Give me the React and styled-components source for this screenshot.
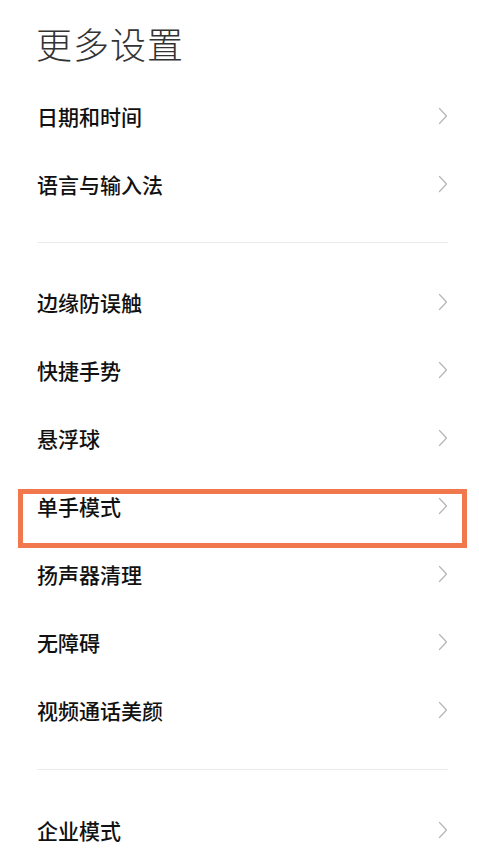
import styled, { createGlobalStyle } from 'styled-components';

const GlobalStyle = createGlobalStyle`
  body {
    margin: 0;
    background: #ffffff;
    font-family: "Noto Sans CJK SC", "Noto Sans", sans-serif;
  }
`;

const Page = styled.div`
  width: 479px;
  min-height: 865px;
  background: #ffffff;
  overflow: hidden;
`;

const Title = styled.h1`
  margin: 0;
  height: 82px;
  padding: 18px 0 0 36px;
  box-sizing: border-box;
  font-size: 36px;
  font-weight: 300;
  line-height: 50px;
  color: #333333;
  letter-spacing: 1px;
`;

const Group = styled.div`
  padding: 0 31px 0 37px;
`;

const Divider = styled.div`
  height: 1px;
  margin: ${(p) => p.$top}px 31px ${(p) => p.$bottom}px 37px;
  background: #ececec;
`;

const Row = styled.div`
  position: relative;
  height: 68px;
  display: flex;
  align-items: center;
  justify-content: space-between;
`;

const Label = styled.span`
  font-size: 21px;
  font-weight: 500;
  color: #111111;
`;

const Highlight = styled.div`
  position: absolute;
  left: -19px;
  right: -19px;
  top: 17px;
  height: 59px;
  border: 5px solid #f0784c;
  box-sizing: border-box;
  pointer-events: none;
`;

const Chevron = () => (
  <svg width="10" height="18" viewBox="0 0 10 18" fill="none">
    <path d="M1.5 1.5 L8.5 9 L1.5 16.5" stroke="#b5b5b5" strokeWidth="1.2" strokeLinecap="round" strokeLinejoin="round" />
  </svg>
);

const Item = ({ label, highlighted }) => (
  <Row>
    <Label>{label}</Label>
    <Chevron />
    {highlighted && <Highlight />}
  </Row>
);

export default function App() {
  return (
    <Page>
      <GlobalStyle />
      <Title>更多设置</Title>
      <Group>
        <Item label="日期和时间" />
        <Item label="语言与输入法" />
      </Group>
      <Divider $top={24} $bottom={25} />
      <Group>
        <Item label="边缘防误触" />
        <Item label="快捷手势" />
        <Item label="悬浮球" />
        <Item label="单手模式" highlighted />
        <Item label="扬声器清理" />
        <Item label="无障碍" />
        <Item label="视频通话美颜" />
      </Group>
      <Divider $top={25} $bottom={26} />
      <Group>
        <Item label="企业模式" />
      </Group>
    </Page>
  );
}
